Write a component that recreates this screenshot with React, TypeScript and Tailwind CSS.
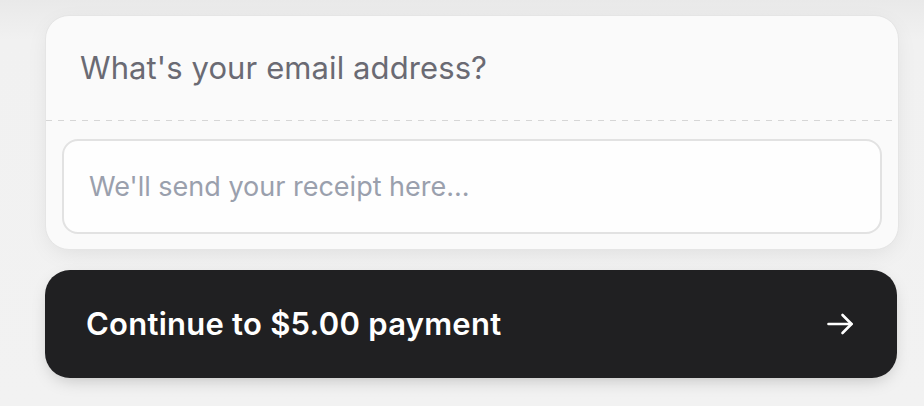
import { useState } from 'react';

function ArrowIcon() {
  return (
    <svg
      width="27"
      height="22"
      viewBox="0 0 27 22"
      fill="none"
      stroke="currentColor"
      strokeWidth="2.6"
      strokeLinecap="round"
      strokeLinejoin="round"
      aria-hidden
    >
      <path d="M1.5 11h23" />
      <path d="M15.5 2l9 9-9 9" />
    </svg>
  );
}

export default function App() {
  const [email, setEmail] = useState('');

  return (
    <div
      className="min-h-[406px] bg-[linear-gradient(180deg,#e9e9e9_0px,#f1f1f1_40px,#f2f2f2_100%)] pl-[45px] pr-[25px] pt-[15px] pb-[28px]"
      style={{ fontFamily: 'Inter, "Noto Sans", sans-serif' }}
    >
      <div className="overflow-hidden rounded-[24px] border border-[#e5e5e5] bg-[#fafafa] shadow-[0_6px_24px_-6px_rgba(0,0,0,0.10)]">
        <div className="flex h-[104px] items-center px-[34px]">
          <h2 className="text-[31px] font-normal tracking-[0.1px] text-[#6a6a73]">
            What's your email address?
          </h2>
        </div>
        <div className="h-px bg-[repeating-linear-gradient(90deg,#d6d6d6_0px,#d6d6d6_6px,transparent_6px,transparent_12px)]" />
        <div className="px-[16px] pt-[18px] pb-[15px]">
          <input
            type="email"
            value={email}
            onChange={(e) => setEmail(e.target.value)}
            placeholder="We'll send your receipt here..."
            className="block h-[95px] w-full rounded-[16px] border-2 border-[#e2e2e2] bg-[#fefefe] px-[25px] text-[27px] text-[#3a3a40] outline-none placeholder:text-[#9aa0ad]"
          />
        </div>
      </div>

      <button
        type="button"
        className="mt-[20px] flex h-[108px] w-[852px] items-center justify-between rounded-[25px] bg-[#202022] pl-[41px] pr-[43px] text-white shadow-[0_6px_18px_-6px_rgba(0,0,0,0.25)]"
      >
        <span className="text-[31px] font-semibold tracking-[0.25px]">Continue to $5.00 payment</span>
        <ArrowIcon />
      </button>
    </div>
  );
}
